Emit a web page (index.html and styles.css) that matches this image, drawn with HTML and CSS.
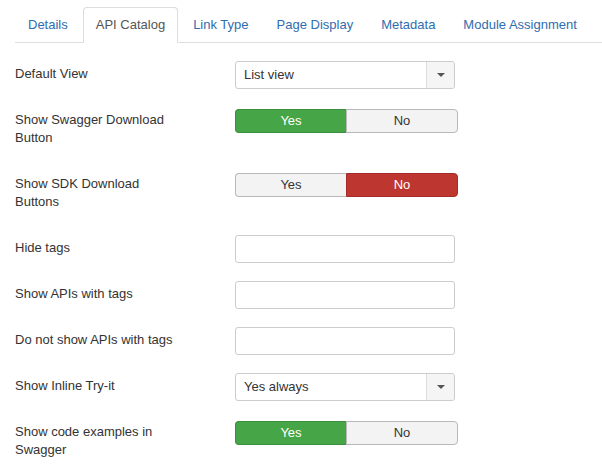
FILE: index.html
```html
<!DOCTYPE html>
<html>
<head>
<meta charset="utf-8">
<link rel="stylesheet" href="styles.css">
</head>
<body>
<div class="page">
  <ul class="tabs">
    <li><a>Details</a></li>
    <li class="active"><a>API Catalog</a></li>
    <li><a>Link Type</a></li>
    <li><a>Page Display</a></li>
    <li><a>Metadata</a></li>
    <li><a>Module Assignment</a></li>
  </ul>
  <div class="form">
    <div class="row row-select">
      <div class="label">Default View</div>
      <div class="select"><span class="select-value">List view</span><span class="select-btn"><span class="caret"></span></span></div>
    </div>
    <div class="row row-toggle row-gap-a">
      <div class="label">Show Swagger Download<br>Button</div>
      <div class="toggle"><span class="opt on-yes">Yes</span><span class="opt">No</span></div>
    </div>
    <div class="row row-toggle row-gap-b">
      <div class="label">Show SDK Download<br>Buttons</div>
      <div class="toggle"><span class="opt">Yes</span><span class="opt on-no">No</span></div>
    </div>
    <div class="row">
      <div class="label">Hide tags</div>
      <div class="input"></div>
    </div>
    <div class="row">
      <div class="label">Show APIs with tags</div>
      <div class="input"></div>
    </div>
    <div class="row">
      <div class="label">Do not show APIs with tags</div>
      <div class="input"></div>
    </div>
    <div class="row row-select">
      <div class="label">Show Inline Try-it</div>
      <div class="select"><span class="select-value">Yes always</span><span class="select-btn"><span class="caret"></span></span></div>
    </div>
    <div class="row row-toggle">
      <div class="label">Show code examples in<br>Swagger</div>
      <div class="toggle"><span class="opt on-yes">Yes</span><span class="opt">No</span></div>
    </div>
  </div>
</div>
</body>
</html>
```
FILE: styles.css
```css
html, body {
  margin: 0;
  padding: 0;
  background: #fff;
}
body {
  font-family: "Liberation Sans", Arial, sans-serif;
  font-size: 13px;
  color: #333;
}
.page {
  padding: 7px 0 0 15px;
}
.tabs {
  list-style: none;
  margin: 0;
  padding: 0;
  display: flex;
  border-bottom: 1px solid #ddd;
}
.tabs li {
  margin-bottom: -1px;
}
.tabs a {
  display: block;
  padding: 8px 12px;
  line-height: 18px;
  margin-right: 2px;
  border: 1px solid transparent;
  border-radius: 4px 4px 0 0;
  color: #2f6db0;
}
.tabs .active a {
  color: #555;
  background: #fff;
  border-color: #ddd #ddd transparent;
}
.form {
  padding-top: 18px;
}
.row {
  display: flex;
  align-items: flex-start;
  margin-bottom: 18px;
}
.label {
  width: 220px;
  flex: none;
  padding-top: 4px;
  line-height: 18px;
}
.row-select {
  margin-bottom: 20px;
}
.row-select .label {
  padding-top: 4px;
}
.row-toggle .label {
  padding-top: 2px;
}
.row-gap-a {
  margin-bottom: 26px;
}
.row-gap-b {
  margin-bottom: 24px;
}
.select {
  width: 220px;
  height: 28px;
  box-sizing: border-box;
  border: 1px solid #ccc;
  border-radius: 3px;
  display: flex;
  background: #fff;
}
.select-value {
  flex: 1;
  padding-left: 8px;
  line-height: 26px;
}
.select-btn {
  width: 27px;
  border-left: 1px solid #ddd;
  background: #f5f5f5;
  border-radius: 0 3px 3px 0;
  display: flex;
  align-items: center;
  justify-content: center;
}
.caret {
  width: 0;
  height: 0;
  border-left: 4px solid transparent;
  border-right: 4px solid transparent;
  border-top: 4px solid #555;
}
.input {
  width: 220px;
  height: 28px;
  box-sizing: border-box;
  border: 1px solid #ccc;
  border-radius: 3px;
  background: #fff;
}
.toggle {
  width: 223px;
  height: 24px;
  display: flex;
}
.opt {
  flex: 1;
  box-sizing: border-box;
  border: 1px solid #b8b8b8;
  background: #f3f3f3;
  color: #333;
  text-align: center;
  line-height: 22px;
}
.opt:first-child {
  border-radius: 4px 0 0 4px;
  border-right: none;
}
.opt:last-child {
  border-radius: 0 4px 4px 0;
}
.on-yes {
  background: #46a546;
  border-color: #3b8e3b;
  color: #fff;
}
.on-no {
  background: #bd362f;
  border-color: #a32e28;
  color: #fff;
}
```
